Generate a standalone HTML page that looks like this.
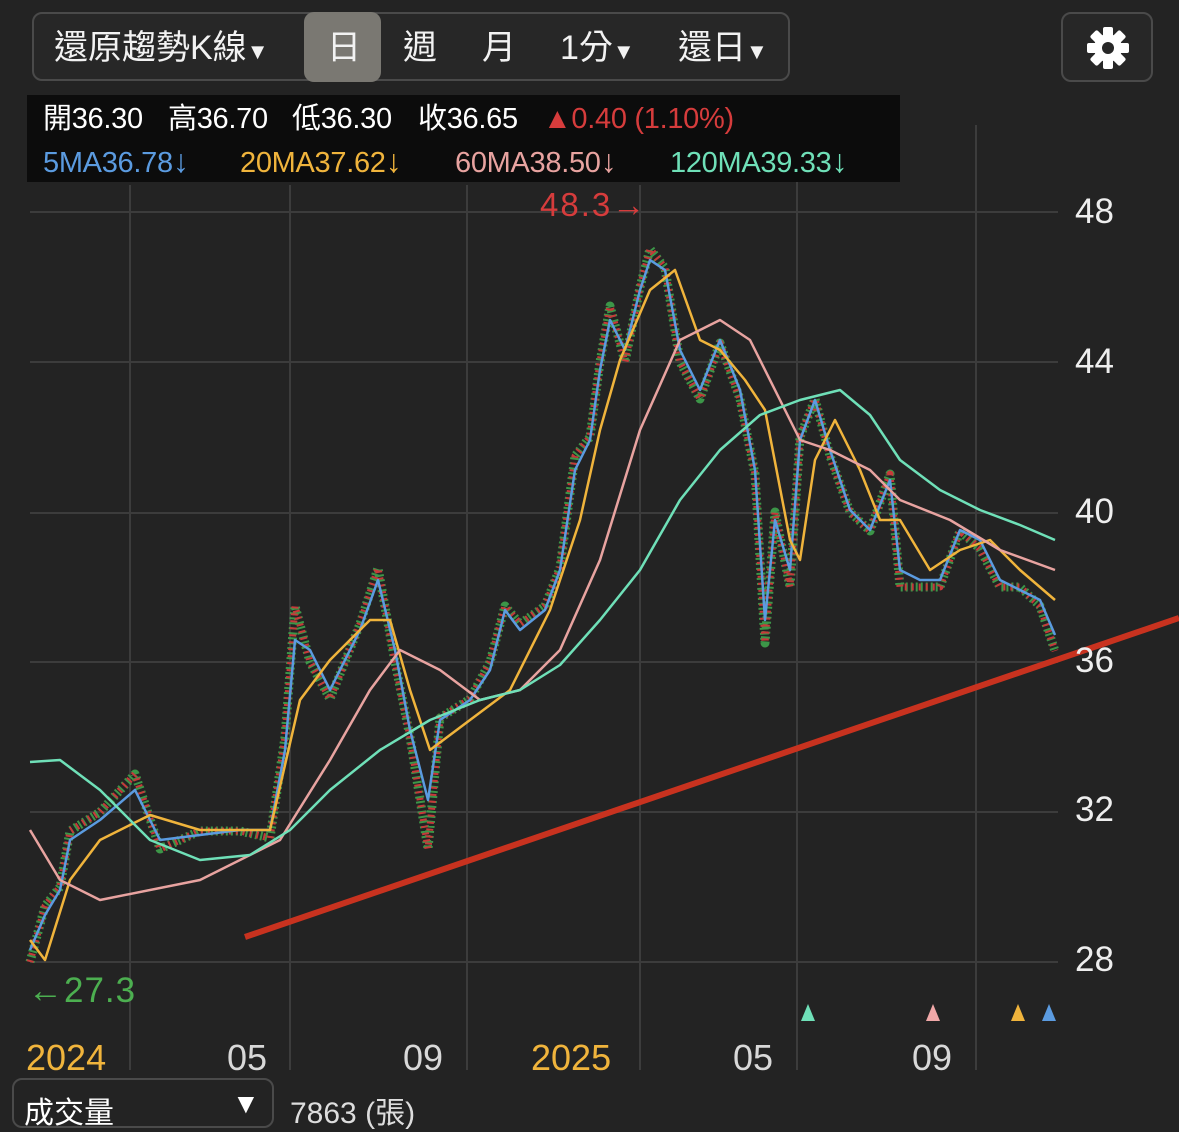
<!DOCTYPE html>
<html><head><meta charset="utf-8"><style>
body{margin:0;width:1179px;height:1108px;background:#232323;overflow:hidden;font-family:"Liberation Sans","Noto Sans CJK TC",sans-serif;color:#fff;position:relative}
.seg{position:absolute;left:32px;top:12px;width:758px;height:69px;border:2px solid #4a4a4a;border-radius:10px;background:#272727;box-sizing:border-box}
.t{position:absolute;font-size:34px;line-height:40px;top:28px;color:#f2f2f2}
.sel{position:absolute;left:304px;top:12px;width:77px;height:70px;background:#7a7872;border-radius:10px}
.gear{position:absolute;left:1061px;top:12px;width:92px;height:70px;border:2px solid #4a4a4a;border-radius:10px;box-sizing:border-box;background:#272727}
.info{position:absolute;left:27px;top:95px;width:873px;height:87px;background:#0c0c0c}
.info div{position:absolute;font-size:29px;line-height:36px;height:36px;white-space:nowrap;letter-spacing:-0.3px}
.ax{position:absolute;font-size:35px;color:#eee}
.bx{position:absolute;font-size:36px;color:#d8d8d8;top:1037px}
</style></head><body>
<svg width="1179" height="1108" style="position:absolute;left:0;top:0">
<g stroke="#3c3c3c" stroke-width="2">
<line x1="30" y1="212" x2="1058" y2="212"/><line x1="30" y1="362" x2="1058" y2="362"/><line x1="30" y1="513" x2="1058" y2="513"/><line x1="30" y1="662" x2="1058" y2="662"/><line x1="30" y1="812" x2="1058" y2="812"/><line x1="30" y1="962" x2="1058" y2="962"/>
<line x1="130" y1="185" x2="130" y2="1070"/><line x1="290" y1="185" x2="290" y2="1070"/><line x1="467" y1="185" x2="467" y2="1070"/><line x1="640" y1="185" x2="640" y2="1070"/><line x1="797" y1="125" x2="797" y2="1070"/><line x1="976" y1="125" x2="976" y2="1070"/>
</g>
<g fill="none" stroke-linejoin="round">
<polyline stroke="#3fa34d" stroke-width="9" stroke-dasharray="2 3" opacity="0.9" points="30,962 45,906 60,887 70,831 100,812 135,774 160,849 200,831 240,831 270,838 285,737 295,606 310,662 330,699 360,624 378,568 395,662 410,737 428,849 440,718 470,699 490,662 505,606 520,624 545,606 560,568 575,456 590,437 600,362 610,306 625,362 640,287 650,249 665,268 680,362 700,399 720,343 740,399 755,474 765,643 775,512 790,587 800,437 815,399 830,456 850,512 870,531 890,474 900,587 920,587 940,587 960,531 980,549 1000,587 1020,587 1040,606 1055,651"/>
<polyline stroke="#c63a3a" stroke-width="7" stroke-dasharray="2 5" points="30,962 45,906 60,887 70,831 100,812 135,774 160,849 200,831 240,831 270,838 285,737 295,606 310,662 330,699 360,624 378,568 395,662 410,737 428,849 440,718 470,699 490,662 505,606 520,624 545,606 560,568 575,456 590,437 600,362 610,306 625,362 640,287 650,249 665,268 680,362 700,399 720,343 740,399 755,474 765,643 775,512 790,587 800,437 815,399 830,456 850,512 870,531 890,474 900,587 920,587 940,587 960,531 980,549 1000,587 1020,587 1040,606 1055,651"/>
<polyline stroke="#5b9be0" stroke-width="2.5" points="30,950 45,915 60,890 70,840 100,820 135,790 160,840 200,835 240,830 270,830 285,750 295,640 310,650 330,690 360,630 378,580 395,650 410,730 428,800 440,720 470,700 490,670 505,610 520,630 545,610 560,570 575,470 590,440 600,370 610,320 625,350 640,290 650,260 665,270 680,350 700,390 720,340 740,390 755,470 765,620 775,520 790,570 800,440 815,400 830,450 850,510 870,530 890,480 900,570 920,580 940,580 960,530 980,540 1000,580 1020,590 1040,600 1055,635"/>
<polyline stroke="#f0b43c" stroke-width="2.5" points="30,940 45,960 70,880 100,840 150,815 200,830 270,830 300,700 330,660 370,620 390,620 410,690 430,750 470,720 510,690 550,610 580,520 600,430 620,360 650,290 675,270 700,340 720,350 745,380 765,410 790,540 800,560 815,460 835,420 860,470 880,520 900,520 930,570 960,550 990,540 1020,570 1055,600"/>
<polyline stroke="#e8a3a0" stroke-width="2.5" points="30,830 60,880 100,900 200,880 280,840 330,760 370,690 400,650 440,670 480,700 520,690 560,650 600,560 640,430 680,340 720,320 750,340 780,400 800,440 830,450 870,470 900,500 950,520 1000,550 1055,570"/>
<polyline stroke="#6fe0b8" stroke-width="2.5" points="30,762 60,760 100,790 150,840 200,860 250,855 290,830 330,790 380,750 430,720 480,700 520,690 560,665 600,620 640,570 680,500 720,450 760,415 800,400 840,390 870,415 900,460 940,490 980,510 1020,525 1055,540"/>
</g>
<line x1="245" y1="937" x2="1179" y2="618" stroke="#c8321f" stroke-width="6"/>
<polygon points="808,1004 801,1021 815,1021" fill="#6fe0b8"/>
<polygon points="933,1004 926,1021 940,1021" fill="#f0a8a8"/>
<polygon points="1018,1004 1011,1021 1025,1021" fill="#f0b43c"/>
<polygon points="1049,1004 1042,1021 1056,1021" fill="#5b9be0"/>
<text x="540" y="216" fill="#d63c3c" font-size="33" font-family="Liberation Sans" letter-spacing="2">48.3→</text>
<text x="28" y="1002" fill="#4caf50" font-size="35" font-family="Liberation Sans" letter-spacing="1">←27.3</text>
</svg>
<div class="seg"></div><div class="sel"></div>
<div class="t" style="left:54px">還原趨勢K線<span style="font-size:22px">▼</span></div>
<div class="t" style="left:327px">日</div>
<div class="t" style="left:403px">週</div>
<div class="t" style="left:482px">月</div>
<div class="t" style="left:560px">1分<span style="font-size:22px">▼</span></div>
<div class="t" style="left:678px">還日<span style="font-size:22px">▼</span></div>
<div class="gear"><svg width="88" height="66" viewBox="0 0 88 66"><g transform="translate(45,34)" fill="#fff"><circle r="14"/><g id="tt"><rect x="-5" y="-21" width="10" height="10" rx="2"/></g><use href="#tt" transform="rotate(45)"/><use href="#tt" transform="rotate(90)"/><use href="#tt" transform="rotate(135)"/><use href="#tt" transform="rotate(180)"/><use href="#tt" transform="rotate(225)"/><use href="#tt" transform="rotate(270)"/><use href="#tt" transform="rotate(315)"/><circle r="6" fill="#272727"/></g></svg></div>
<div class="info">
<div style="left:16px;top:6px">開36.30</div>
<div style="left:141px;top:6px">高36.70</div>
<div style="left:265px;top:6px">低36.30</div>
<div style="left:391px;top:6px">收36.65</div>
<div style="left:516px;top:6px;color:#d63c3c"><span style="font-family:'Liberation Sans',sans-serif">▲</span>0.40 (1.10%)</div>
<div style="left:16px;top:48px;color:#5b9be0">5MA36.78<span style="font-size:32px">↓</span></div>
<div style="left:213px;top:48px;color:#f0b43c">20MA37.62<span style="font-size:32px">↓</span></div>
<div style="left:428px;top:48px;color:#e8a3a0">60MA38.50<span style="font-size:32px">↓</span></div>
<div style="left:643px;top:48px;color:#6fe0b8">120MA39.33<span style="font-size:32px">↓</span></div>
</div>
<div class="ax" style="left:1075px;top:192px">48</div>
<div class="ax" style="left:1075px;top:342px">44</div>
<div class="ax" style="left:1075px;top:492px">40</div>
<div class="ax" style="left:1075px;top:641px">36</div>
<div class="ax" style="left:1075px;top:790px">32</div>
<div class="ax" style="left:1075px;top:940px">28</div>
<div class="bx" style="left:26px;color:#f0b43c">2024</div>
<div class="bx" style="left:227px">05</div>
<div class="bx" style="left:403px">09</div>
<div class="bx" style="left:531px;color:#f0b43c">2025</div>
<div class="bx" style="left:733px">05</div>
<div class="bx" style="left:912px">09</div>
<div style="position:absolute;left:12px;top:1078px;width:262px;height:50px;border:2px solid #4a4a4a;border-radius:10px;box-sizing:border-box"></div>
<div style="position:absolute;left:24px;top:1088px;font-size:30px">成交量</div>
<div style="position:absolute;left:232px;top:1088px;font-size:28px">▼</div>
<div style="position:absolute;left:290px;top:1088px;font-size:30px;color:#ddd">7863 (張)</div>
</body></html>
